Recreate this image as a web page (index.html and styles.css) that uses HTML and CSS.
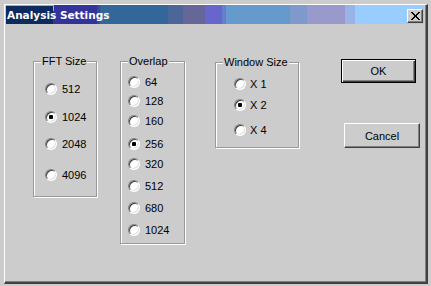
FILE: index.html
```html
<!DOCTYPE html>
<html>
<head>
  <title>Analysis Settings</title>
  <link rel="stylesheet" href="styles.css">
</head>
<body>
  <div class="window">
    <div class="title-bar">
      <span class="title-text">Analysis Settings</span>
      <span class="close-btn">
        <svg width="9" height="8" viewBox="0 0 9 8">
          <path d="M0 0h2v1h1v1h1v1h1v-1h1v-1h1v-1h2v1h-1v1h-1v1h-1v2h1v1h1v1h1v1h-2v-1h-1v-1h-1v-1h-1v1h-1v1h-1v1h-2v-1h1v-1h1v-1h1v-2h-1v-1h-1v-1h-1z" fill="#000"/>
        </svg>
      </span>
    </div>

    <div class="content">
      <!-- FFT size -->
      <div class="group fft">
        <div class="group-label">FFT Size</div>
        <div class="opt"><span class="radio"></span>512</div>
        <div class="opt"><span class="radio checked"></span>1024</div>
        <div class="opt"><span class="radio"></span>2048</div>
        <div class="opt"><span class="radio"></span>4096</div>
      </div>

      <!-- Overlap -->
      <div class="group overlap">
        <div class="group-label">Overlap</div>
        <div class="opt"><span class="radio"></span>64</div>
        <div class="opt"><span class="radio"></span>128</div>
        <div class="opt"><span class="radio"></span>160</div>
        <div class="opt"><span class="radio checked"></span>256</div>
        <div class="opt"><span class="radio"></span>320</div>
        <div class="opt"><span class="radio"></span>512</div>
        <div class="opt"><span class="radio"></span>680</div>
        <div class="opt"><span class="radio"></span>1024</div>
      </div>

      <!-- Window size -->
      <div class="group winsize">
        <div class="group-label">Window Size</div>
        <div class="opt"><span class="radio"></span>X 1</div>
        <div class="opt"><span class="radio checked"></span>X 2</div>
        <div class="opt"><span class="radio"></span>X 4</div>
      </div>

      <div class="buttons">
        <button class="btn btn-default">OK</button>
        <button class="btn btn-cancel">Cancel</button>
      </div>
    </div>
  </div>
</body>
</html>
```

FILE: styles.css
```css
body {
  margin: 0;
  width: 431px;
  height: 286px;
  overflow: hidden;
  background-color: #cccccc;
  font-family: "Liberation Sans", Arial, sans-serif;
  font-size: 11px;
  color: #000;
}

.window {
  box-sizing: border-box;
  width: 424px;
  height: 280px;
  margin: 4px 0 0 4px;
  padding: 0 2px 0 1px;
  background-color: #cccccc;
  border-top: 1px solid #ffffff;
  border-left: 1px solid #ffffff;
  border-right: 2px solid #404040;
  border-bottom: 2px solid #404040;
  box-shadow: inset -1px -1px 0 #808080;
}

.title-bar {
  display: flex;
  justify-content: space-between;
  align-items: center;
  height: 19px;
  padding: 0 1px 0 1px;
  background:
    linear-gradient(#d9a66a, #d9a66a) 0 0 / 48px 1px no-repeat,
    linear-gradient(#d9a66a, #d9a66a) 47px 0 / 1px 6px no-repeat,
    linear-gradient(to right,
      #0d2b5e 0, #0d2b5e 47px,
      #333399 47px, #333399 91px,
      #334d99 91px, #334d99 94px,
      #336699 94px, #336699 162px,
      #4d6699 162px, #4d6699 177px,
      #666699 177px, #666699 199px,
      #6666cc 199px, #6666cc 216px,
      #667fcc 216px, #667fcc 220px,
      #6699cc 220px, #6699cc 284px,
      #8099cc 284px, #8099cc 301px,
      #9999cc 301px, #9999cc 339px,
      #99b3e6 339px, #99b3e6 349px,
      #99ccff 349px, #99ccff 100%);
}

.title-text {
  font-family: "DejaVu Sans", Verdana, sans-serif;
  font-weight: bold;
  font-size: 10.5px;
  color: #ffffff;
  margin-top: 1px;
}

.close-btn {
  box-sizing: border-box;
  display: flex;
  align-items: center;
  justify-content: center;
  width: 16px;
  height: 14px;
  margin-top: 2px;
  background-color: #cccccc;
  border-top: 1px solid #ffffff;
  border-left: 1px solid #ffffff;
  border-right: 1px solid #404040;
  border-bottom: 1px solid #404040;
  box-shadow: inset -1px -1px 0 #808080;
}

.content {
  display: flex;
  align-items: flex-start;
  padding: 35px 0 0 27px;
}

.group {
  box-sizing: border-box;
  display: flex;
  flex-direction: column;
  border: 1px solid #999999;
  box-shadow: 1px 1px 0 #ffffff, inset 1px 1px 0 #ffffff;
}

.group-label {
  align-self: flex-start;
  white-space: nowrap;
  margin: -7px 0 0 7px;
  padding: 0 1px;
  line-height: 12px;
  background-color: #cccccc;
}

.opt {
  display: flex;
  align-items: center;
  gap: 5px;
  height: 12px;
  line-height: 12px;
}

.radio {
  box-sizing: border-box;
  display: flex;
  align-items: center;
  justify-content: center;
  width: 12px;
  height: 12px;
  border-radius: 50%;
  background-color: #ffffff;
  border: 1px solid;
  border-color: #808080 #ffffff #ffffff #808080;
  box-shadow: inset 1px 1px 0 #404040, inset -1px -1px 0 #dfdfdf;
}

.radio.checked::after {
  content: "";
  width: 4px;
  height: 4px;
  border-radius: 1px;
  background-color: #000000;
}

/* FFT Size */
.fft {
  width: 64px;
  height: 136px;
  margin-top: 2px;
}
.fft .opt { margin-left: 11px; }
.fft .opt:nth-child(2) { margin-top: 16px; }
.fft .opt:nth-child(3) { margin-top: 16px; }
.fft .opt:nth-child(4) { margin-top: 15px; }
.fft .opt:nth-child(5) { margin-top: 19px; }

/* Overlap */
.overlap {
  width: 65px;
  height: 183px;
  margin: 2px 0 0 23px;
}
.overlap .opt { margin-left: 7px; }
.overlap .opt:nth-child(2) { margin-top: 9px; }
.overlap .opt:nth-child(3) { margin-top: 7px; }
.overlap .opt:nth-child(4) { margin-top: 8px; }
.overlap .opt:nth-child(5) { margin-top: 11px; }
.overlap .opt:nth-child(6) { margin-top: 8px; }
.overlap .opt:nth-child(7) { margin-top: 10px; }
.overlap .opt:nth-child(8) { margin-top: 10px; }
.overlap .opt:nth-child(9) { margin-top: 10px; }

/* Window Size */
.winsize {
  width: 84px;
  height: 86px;
  margin: 3px 0 0 30px;
}
.winsize .opt { gap: 4px; margin-left: 18px; }
.winsize .opt:nth-child(2) { margin-top: 10px; }
.winsize .opt:nth-child(3) { margin-top: 9px; }
.winsize .opt:nth-child(4) { margin-top: 13px; }

/* Buttons */
.buttons {
  display: flex;
  flex-direction: column;
  align-items: flex-start;
  margin-left: 42px;
}

.btn {
  box-sizing: border-box;
  padding: 0;
  font-family: "Liberation Sans", Arial, sans-serif;
  font-size: 11px;
  color: #000;
  background-color: #cccccc;
  border-top: 1px solid #ffffff;
  border-left: 1px solid #ffffff;
  border-right: 1px solid #404040;
  border-bottom: 1px solid #404040;
  box-shadow: inset -1px -1px 0 #808080;
}

.btn-default {
  width: 75px;
  height: 24px;
  border: 1px solid #000000;
  box-shadow: inset 1px 1px 0 #ffffff, inset -1px -1px 0 #404040, inset -2px -2px 0 #808080;
}

.btn-cancel {
  width: 76px;
  height: 25px;
  margin: 40px 0 0 3px;
}
```
